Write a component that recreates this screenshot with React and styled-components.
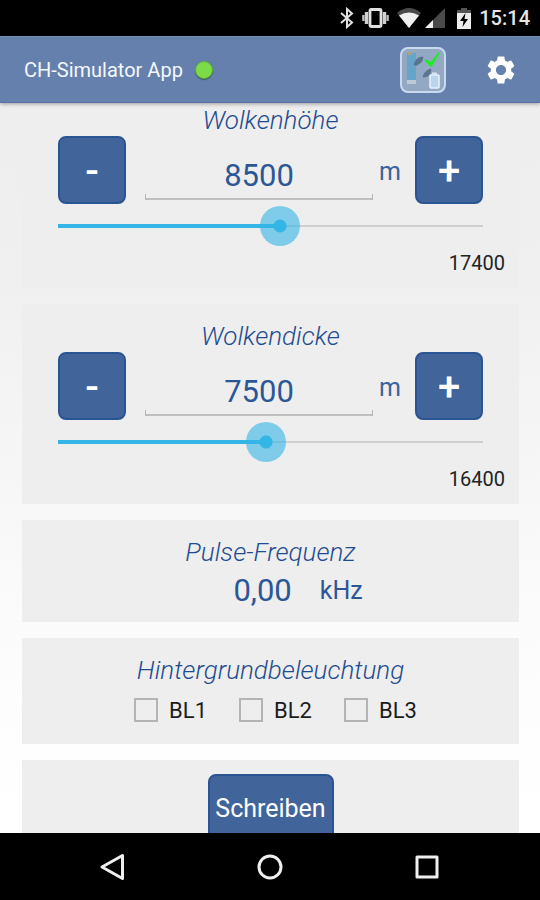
import React, { useState } from "react";
import styled, { createGlobalStyle } from 'styled-components';
import { MdSettings } from 'react-icons/md';

const GlobalStyle = createGlobalStyle`
    * {
        box-sizing: border-box;
    }
    body {
        margin: 0;
        font-family: Roboto, "Liberation Sans", sans-serif;
    }
    button, input {
        font-family: inherit;
    }
`

const Screen = styled.div`
    display: flex;
    flex-direction: column;
    height: 100vh;
    background: #000;
`

const StatusBar = styled.div`
    flex: none;
    display: flex;
    align-items: center;
    justify-content: flex-end;
    height: 36px;
    padding-right: 10px;
    color: #e6e6e6;
    font-size: 20px;
    font-weight: 500;

    svg {
        margin-right: 8px;
    }
`

const Header = styled.header`
    flex: none;
    display: flex;
    align-items: center;
    height: 67px;
    padding: 0 22px 0 24px;
    background: #6580ac;
    border-top: 1px solid #7590b8;
    border-bottom: 1px solid #5672a4;
    box-shadow: 0 1px 4px rgba(0, 0, 0, 0.35);
    z-index: 1;
`

const AppTitle = styled.h1`
    margin: 0;
    font-size: 20px;
    font-weight: 400;
    color: #f4f8ff;
`

const StatusDot = styled.span`
    width: 18px;
    height: 18px;
    margin-left: 12px;
    margin-right: auto;
    border-radius: 50%;
    border: 1px solid #5cae3c;
    background: #7cdc48;
    box-shadow: 0 1px 1px #3c5560;
`

const IconButton = styled.button`
    display: flex;
    margin-left: 38px;
    padding: 0;
    border: none;
    background: none;
    color: #fff;
    cursor: pointer;
`

const Content = styled.main`
    flex: 1;
    min-height: 0;
    overflow: hidden;
    background: linear-gradient(#eeeeee 0%, #f0f0f0 25%, #f7f7f7 53%, #fdfdfd 80%, #ffffff 100%);
`

// list is scrolled a bit, the first card starts under the header
const CardList = styled.div`
    display: flex;
    flex-direction: column;
    gap: 16px;
    margin-top: -15px;
    padding: 0 21px 0 22px;
`

const Card = styled.section`
    padding: 16px 36px 10px;
    background: #eeeeee;
`

const CardTitle = styled.h2`
    display: block;
    margin: 0;
    font-size: 26px;
    line-height: 32px;
    font-weight: 300;
    font-style: italic;
    text-align: center;
    color: #1f4c90;
`

const ValueRow = styled.div`
    display: grid;
    grid-template-columns: 68px 1fr 42px 68px;
    height: 68px;
`

const ActionButton = styled.button`
    height: 68px;
    padding: 0;
    border: 2px solid #2a5492;
    border-radius: 8px;
    background: #41649a;
    color: #fff;
    font-size: 25px;
    cursor: pointer;
`

const StepButton = styled(ActionButton)`
    padding-top: 4px;
    font-size: 40px;
    font-weight: 500;
    line-height: 40px;
`

const ValueInput = styled.input`
    width: calc(100% - 19px);
    height: 64px;
    margin-left: 19px;
    padding: 14px 0 0;
    border: none;
    outline: none;
    border-radius: 0;
    font-size: 31px;
    text-align: center;
    color: #2b5797;
    background:
        linear-gradient(#b8b8b8, #b8b8b8) left bottom / 1px 6px no-repeat,
        linear-gradient(#b8b8b8, #b8b8b8) right bottom / 1px 6px no-repeat,
        linear-gradient(#bfbfbf, #bfbfbf) left bottom / 100% 2px no-repeat;
`

const Unit = styled.span`
    font-size: 25px;
    line-height: 72px;
    padding-left: 6px;
    color: #3a639f;
`

const Slider = styled.input.attrs({ type: 'range' })`
    display: block;
    appearance: none;
    width: 100%;
    height: 44px;
    margin: 0;
    outline: none;
    background:
        linear-gradient(#33b5e5, #33b5e5) left center / var(--fill) 4px no-repeat,
        linear-gradient(#d0d0d0, #d0d0d0) left center / 100% 2px no-repeat;

    &::-webkit-slider-thumb {
        appearance: none;
        width: 40px;
        height: 40px;
        border-radius: 50%;
        background: radial-gradient(circle, #33b5e5 6px, rgba(51, 181, 229, 0.6) 7px);
    }
`

const MaxValue = styled.div`
    height: 30px;
    margin-right: -22px;
    font-size: 20px;
    line-height: 30px;
    text-align: right;
    color: #222;
`

const FrequencyRow = styled.div`
    display: grid;
    grid-template-columns: 55fr 45fr;
    align-items: center;
    height: 44px;
    color: #2b5797;
`

const Frequency = styled.span`
    font-size: 31px;
    text-align: right;
`

const FrequencyUnit = styled.span`
    padding-left: 28px;
    font-size: 25px;
`

const CheckRow = styled.div`
    display: flex;
    justify-content: center;
    gap: 32px;
    height: 48px;
    padding-left: 10px;
`

const CheckLabel = styled.label`
    display: flex;
    align-items: center;
    gap: 11px;
    font-size: 22px;
    color: #1c1c1c;
`

const CheckBox = styled.input.attrs({ type: 'checkbox' })`
    appearance: none;
    width: 24px;
    height: 24px;
    margin: 0;
    border: 2px solid #b4b4b4;

    &:checked {
        background: #33b5e5;
    }
`

const SubmitCard = styled(Card)`
    display: flex;
    justify-content: center;
    padding-top: 14px;

    button {
        width: 126px;
    }
`

const NavBar = styled.nav`
    flex: none;
    display: flex;
    align-items: center;
    justify-content: center;
    gap: 117px;
    height: 67px;
    background: #000;
`

const NavButton = styled.button`
    display: flex;
    padding: 0;
    border: none;
    background: none;
    cursor: pointer;
`

function StatusIcons(){
    return(
        <>
            <svg width="14" height="22" viewBox="0 0 14 22" fill="none" stroke="#e0e0e0" strokeWidth="2">
                <path d="M1 6 L12 15.5 L7 20 V2 L12 6.5 L1 16" />
            </svg>
            <svg width="27" height="20" viewBox="0 0 27 20" fill="none" stroke="#e0e0e0" strokeWidth="2">
                <rect x="8" y="1.5" width="11" height="17" rx="1" strokeWidth="2.8" />
                <path d="M4.5 4 V16 M22.5 4 V16" strokeWidth="3.4" stroke="#d0d0d0" />
                <path d="M1.4 7 V13 M25.6 7 V13" strokeWidth="2.4" stroke="#c0c0c0" />
            </svg>
            <svg width="24" height="20" viewBox="0 0 24 20">
                <path d="M0 5 Q12 -5 24 5 L12 20 Z" fill="#4a4a4a" />
                <path d="M2 7.500 Q12 1.5 22 7.500 L12 20 Z" fill="#f0f0f0" />
            </svg>
            <svg width="20" height="20" viewBox="0 0 20 20" style={{ marginLeft: '-4px' }}>
                <path d="M20 0 V20 H0 Z" fill="#4a4a4a" />
                <path d="M8 12 V20 H0 Z" fill="#f0f0f0" />
            </svg>
            <svg width="14" height="21" viewBox="0 0 14 21" style={{ marginLeft: '4px' }}>
                <path d="M4 0 H10 V2 H14 V6 H0 V2 H4 Z" fill="#555" />
                <path d="M0 5 H14 V21 H0 Z" fill="#ececec" />
                <path d="M8.5 5 L3 13 H6.5 L5.5 19 L11 11 H7.5 Z" fill="#000" />
            </svg>
        </>
    );
}

function DeviceIcon(){
    return(
        <svg width="46" height="46" viewBox="0 0 46 46">
            <rect x="1" y="1" width="44" height="44" rx="7" fill="#93a9c3" stroke="#c9daf0" strokeWidth="2" />
            <rect x="7" y="6" width="9" height="27" fill="#64a5c9" />
            <rect x="8" y="5" width="4" height="3" fill="#b0a080" />
            <rect x="7" y="33" width="9" height="4" fill="#bccbd6" />
            <path d="M14 18 Q16 10 23 10 Q22 18 14 18 M16 19 L22 10" fill="#5a7492" stroke="#5a7492" />
            <path d="M23 30 Q25 23 31 22 Q31 30 23 30 M24 30 L30 22" fill="#5a7492" stroke="#5a7492" />
            <path d="M25 13 L31 16 L39 6 L31 19 Z" fill="#18f018" stroke="#18f018" strokeWidth="1.5" />
            <rect x="30" y="28" width="9" height="13" rx="1" fill="#bcd4ea" stroke="#e8f2fc" strokeWidth="1.5" />
            <path d="M32 26.5 H37" stroke="#d8e6f4" strokeWidth="2" />
        </svg>
    );
}

function ValueCard({ title, id, start, max, startPosition }){
    const [value, setValue] = useState(start);
    const [position, setPosition] = useState(startPosition);

    const step = (amount) => {
        setValue(Number(value) + amount);
        setPosition(position + amount / max * 100);
    };

    const onSlide = (event) => {
        const next = Number(event.target.value);
        setPosition(next);
        setValue(Math.round(next * max / 10000) * 100);
    };

    return(
        <Card>
            <CardTitle as="label" htmlFor={id}>{title}</CardTitle>
            <ValueRow>
                <StepButton type="button" onClick={() => step(-100)}>-</StepButton>
                <ValueInput id={id} value={value} onChange={(event) => setValue(event.target.value)} />
                <Unit>m</Unit>
                <StepButton type="button" onClick={() => step(100)}>+</StepButton>
            </ValueRow>
            <Slider
                aria-label={title}
                min="0"
                max="100"
                step="0.1"
                value={position}
                onChange={onSlide}
                style={{ '--fill': `calc(20px + (100% - 40px) * ${position / 100})` }}
            />
            <MaxValue>{max}</MaxValue>
        </Card>
    );
}

function App(){
    const lights = ['BL1', 'BL2', 'BL3'];

    return(
        <Screen>
            <GlobalStyle />
            <StatusBar>
                <StatusIcons />
                <span>15:14</span>
            </StatusBar>
            <Header>
                <AppTitle>CH-Simulator App</AppTitle>
                <StatusDot />
                <IconButton type="button" aria-label="Simulator"><DeviceIcon /></IconButton>
                <IconButton type="button" aria-label="Einstellungen"><MdSettings size={34} /></IconButton>
            </Header>
            <Content>
                <CardList>
                    <ValueCard title="Wolkenhöhe" id="height" start={8500} max={17400} startPosition={52.5} />
                    <ValueCard title="Wolkendicke" id="thickness" start={7500} max={16400} startPosition={48.8} />
                    <Card>
                        <CardTitle>Pulse-Frequenz</CardTitle>
                        <FrequencyRow>
                            <Frequency>0,00</Frequency>
                            <FrequencyUnit>kHz</FrequencyUnit>
                        </FrequencyRow>
                    </Card>
                    <Card>
                        <CardTitle>Hintergrundbeleuchtung</CardTitle>
                        <CheckRow>
                            {lights.map((name) => (
                                <CheckLabel key={name}>
                                    <CheckBox />
                                    {name}
                                </CheckLabel>
                            ))}
                        </CheckRow>
                    </Card>
                    <SubmitCard>
                        <ActionButton type="submit">Schreiben</ActionButton>
                    </SubmitCard>
                </CardList>
            </Content>
            <NavBar>
                <NavButton type="button" aria-label="Zurück">
                    <svg width="40" height="40" viewBox="0 0 40 40" fill="none" stroke="#efefef" strokeWidth="3" strokeLinejoin="round">
                        <path d="M9 20 L29.500 8.500 V31.500 Z" />
                    </svg>
                </NavButton>
                <NavButton type="button" aria-label="Start">
                    <svg width="40" height="40" viewBox="0 0 40 40" fill="none" stroke="#efefef" strokeWidth="3">
                        <circle cx="20" cy="20" r="11" />
                    </svg>
                </NavButton>
                <NavButton type="button" aria-label="Übersicht">
                    <svg width="40" height="40" viewBox="0 0 40 40" fill="none" stroke="#efefef" strokeWidth="3" strokeLinejoin="round">
                        <rect x="10" y="10" width="20" height="20" />
                    </svg>
                </NavButton>
            </NavBar>
        </Screen>
    );
}

export default App;
